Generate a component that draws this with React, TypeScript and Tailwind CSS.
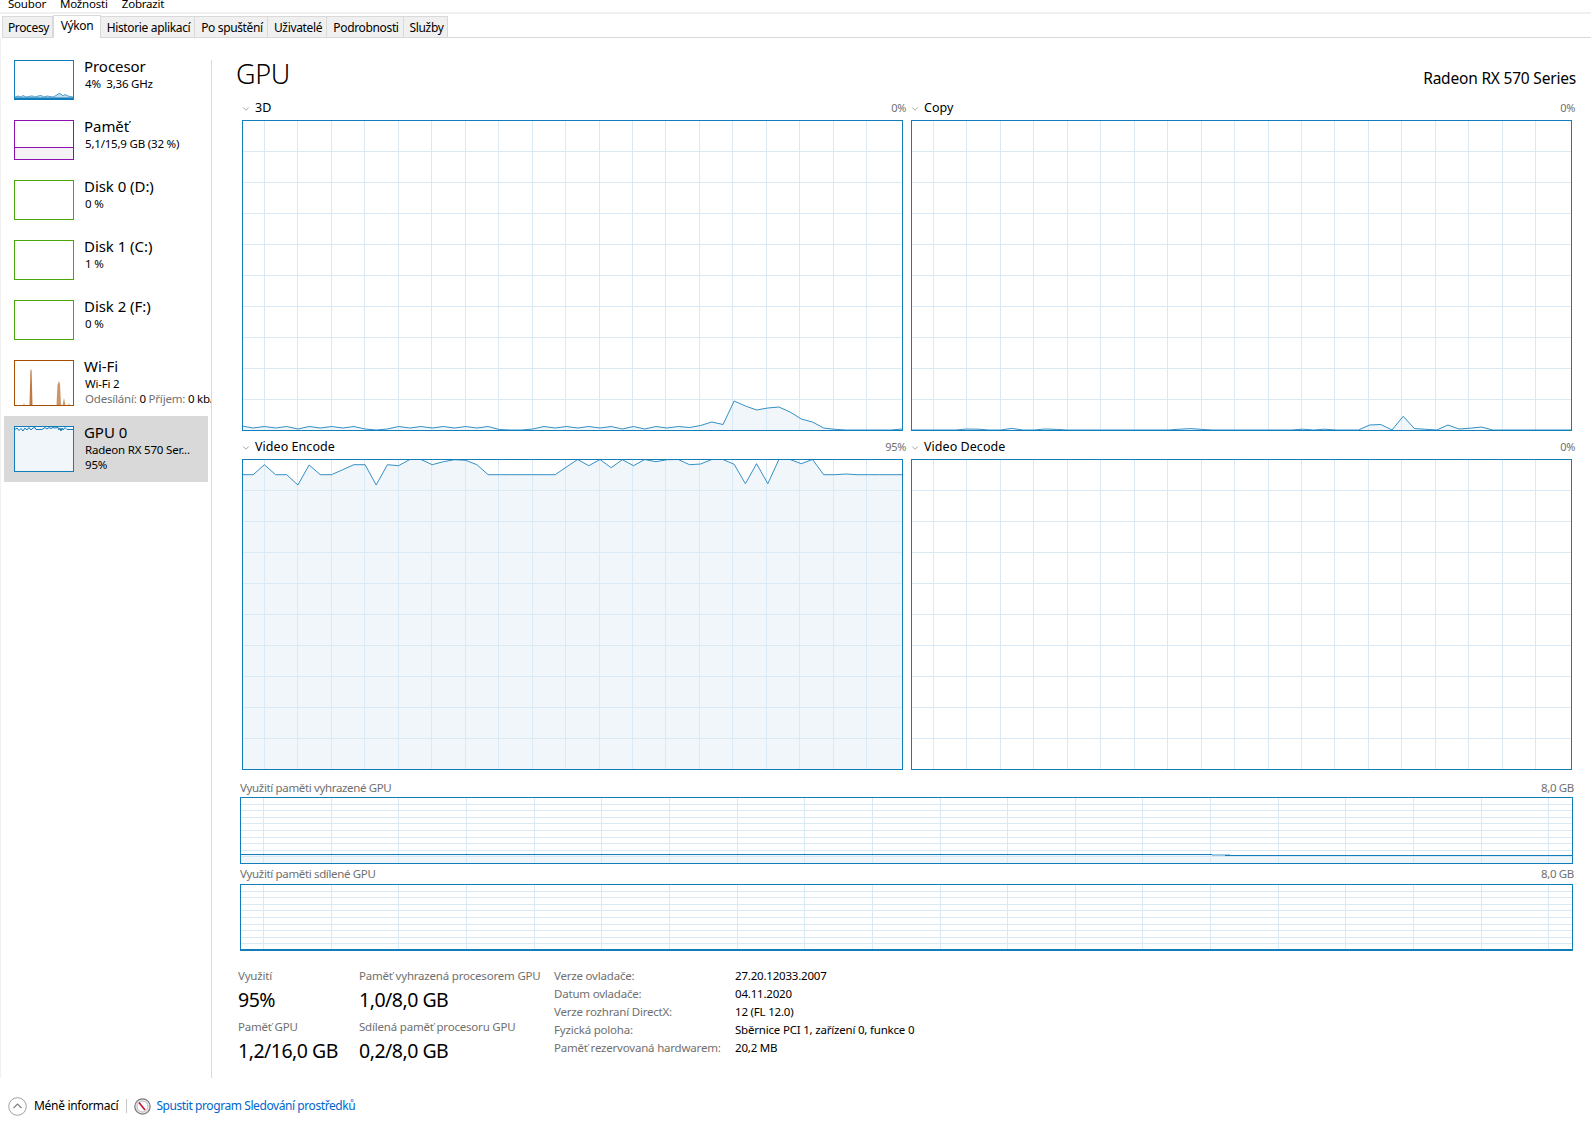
import { ChevronDown } from "lucide-react"

const BLUE = "#117dbb"
const GRID = "#d9eaf4"
const FILL = "#f1f6fa"

const TABS = [
  { label: "Procesy", w: "w-[51px]" },
  { label: "Výkon", w: "w-[48px]", active: true },
  { label: "Historie aplikací", w: "w-[94px]" },
  { label: "Po spuštění", w: "w-[73px]" },
  { label: "Uživatelé", w: "w-[59px]" },
  { label: "Podrobnosti", w: "w-[77px]" },
  { label: "Služby", w: "w-[44px]" },
]

// sample heights in px above the graph floor, 60 samples across
const GRAPH_3D = [
  4, 2, 3.5, 2, 3.5, 1, 3.5, 2, 3.5, 2, 3.5, 1, 0, 1, 3.5, 2, 3.5, 2, 3.5, 2, 3.5, 2, 3.5, 0.5, 0, 0, 1, 3.5, 2, 3.5, 2,
  3.5, 2, 3.5, 1, 3.5, 1, 3.5, 2, 3.5, 2.5, 4.5, 8, 5.5, 29, 24, 20, 22, 23, 18, 11, 8, 2, 0.7, 0, 0, 0, 0, 0, 1,
]
const GRAPH_COPY = [
  0, 0, 0, 0, 0, 1, 0.8, 0, 0, 1.6, 0, 0, 1, 0.6, 0, 0, 0, 0, 0, 0, 0, 0, 0, 0, 0.8, 1.4, 0.6, 0, 0, 0, 0, 0, 0, 0, 0, 0.8,
  0, 0.8, 0, 0, 0, 5, 5.5, 0, 13.7, 1.5, 0.7, 0, 5, 1, 1.8, 3, 0, 0, 0, 0, 0, 0, 0, 0,
]
const GRAPH_ENCODE = [
  15.7, 15.7, 5.7, 15.7, 15.7, 26, 6, 15.7, 15.7, 10.7, 5.7, 5.7, 26, 5.7, 6.7, 0.5, 0.5, 5.7, 2.7, 0.7, 1.3, 5.7, 15.7,
  15.7, 15.7, 15.7, 15.7, 15.7, 15.7, 8, 0.5, 6.7, 0.5, 8.7, 0.7, 6.7, 0.5, 2.7, 0.7, 0.5, 5.7, 5, 0.5, 0.5, 5.3, 24.7,
  4.7, 24.7, 0.5, 0.5, 4.7, 0.5, 15.7, 15.7, 15, 15.7, 15.7, 15.7, 15.7, 15.7,
]

function BigGraph({ floor, samples }: { floor?: boolean; samples?: number[] }) {
  const W = 661
  const H = 311
  let pts = ""
  if (samples) {
    pts = samples
      .map((v, i) => {
        const x = (i * (W - 1)) / (samples.length - 1)
        const y = floor ? H - 1 - v : v
        return `${x.toFixed(1)},${y.toFixed(1)}`
      })
      .join(" ")
  }
  return (
    <svg viewBox={`0 0 ${W} ${H}`} preserveAspectRatio="none" className="block w-full h-[311px]">
      {samples && <polygon points={`0,${H} ${pts} ${W},${H}`} fill={FILL} />}
      {Array.from({ length: 19 }).map((_, i) => {
        const x = Math.round(22 + i * 33.45) + 0.5
        return <line key={i} x1={x} x2={x} y1={0} y2={H} stroke={GRID} strokeWidth={1} shapeRendering="crispEdges" />
      })}
      {Array.from({ length: 9 }).map((_, i) => {
        const y = 31 * (i + 1) + 0.5
        return <line key={i} x1={0} x2={W} y1={y} y2={y} stroke={GRID} strokeWidth={1} shapeRendering="crispEdges" />
      })}
      {samples && <polyline points={pts} fill="none" stroke={BLUE} strokeOpacity={0.85} strokeWidth={1} />}
      <rect x={0.5} y={0.5} width={W - 1} height={H - 1} fill="none" stroke={BLUE} strokeWidth={1} shapeRendering="crispEdges" />
    </svg>
  )
}

function WideGraph({ kind }: { kind: "reserved" | "shared" }) {
  const W = 1333
  const H = 67
  return (
    <svg viewBox={`0 0 ${W} ${H}`} preserveAspectRatio="none" className="block w-full h-[67px]">
      {kind === "reserved" && <rect x={0} y={58} width={W} height={H - 58} fill={FILL} />}
      {Array.from({ length: 20 }).map((_, i) => {
        const x = Math.round(23 + i * 67.65) + 0.5
        return <line key={i} x1={x} x2={x} y1={0} y2={H} stroke={GRID} strokeWidth={1} shapeRendering="crispEdges" />
      })}
      {Array.from({ length: 9 }).map((_, i) => {
        const y = Math.round(6.6 * (i + 1)) + 0.5
        return <line key={i} x1={0} x2={W} y1={y} y2={y} stroke={GRID} strokeWidth={1} shapeRendering="crispEdges" />
      })}
      {kind === "reserved" && (
        <>
          <rect x={0} y={57} width={972} height={1} fill={BLUE} />
          <rect x={972} y={57} width={18} height={2} fill={BLUE} fillOpacity={0.4} />
          <rect x={985} y={58} width={W - 985} height={1} fill={BLUE} />
        </>
      )}
      {kind === "shared" && <rect x={0} y={H - 2} width={W} height={2} fill={BLUE} />}
      <rect x={0.5} y={0.5} width={W - 1} height={H - 1} fill="none" stroke={BLUE} strokeWidth={1} shapeRendering="crispEdges" />
    </svg>
  )
}

function Thumb({ color, tall, children, fill }: { color: string; tall?: boolean; fill?: string; children?: React.ReactNode }) {
  return (
    <div
      className={`w-[60px] shrink-0 border relative overflow-hidden ${tall ? "h-[46px]" : "h-[40px]"}`}
      style={{ borderColor: color, backgroundColor: fill || "#fff" }}
    >
      {children}
    </div>
  )
}

function CpuSpark() {
  return (
    <svg viewBox="0 0 58 38" className="block w-full h-full">
      <polygon
        points="0,37 0,36 3,35 6,36 8,34.5 11,36 14,35.5 17,34.8 20,36 23,35 26,34.5 29,36 32,35 35,35.5 38,36 41,34.5 44,32.5 46,33 48,35 50,33.5 53,35 55,35.5 58,36 58,38 0,38"
        fill="#c5dded"
      />
      <polyline
        points="0,36 3,35 6,36 8,34.5 11,36 14,35.5 17,34.8 20,36 23,35 26,34.5 29,36 32,35 35,35.5 38,36 41,34.5 44,32.5 46,33 48,35 50,33.5 53,35 55,35.5 58,36"
        fill="none"
        stroke={BLUE}
        strokeOpacity={0.7}
        strokeWidth={1}
      />
      <rect x={0} y={36.5} width={58} height={1.5} fill={BLUE} />
    </svg>
  )
}

function MemFill() {
  return <div className="absolute inset-x-0 bottom-0 h-[12px] bg-[#f4f2f4] border-t border-[#8b12ae]" />
}

function WifiSpark() {
  const c = "#a74f01"
  return (
    <svg viewBox="0 0 58 44" className="block w-full h-full">
      <path d="M14.5 44 L15.4 10 L16 8 L16.6 10 L17.5 44 Z" fill={c} fillOpacity={0.75} />
      <path d="M41.5 44 L42.5 24 L44 20 L45 23 L46 44 Z" fill={c} fillOpacity={0.6} />
      <path d="M47.5 44 L49 37 L50.5 44 Z" fill={c} fillOpacity={0.55} />
      <path d="M8 44 L9 42 L10 44 Z M53 44 L54 42 L55 44 Z" fill={c} fillOpacity={0.4} />
    </svg>
  )
}

function GpuSpark() {
  return (
    <svg viewBox="0 0 58 44" className="block w-full h-full">
      <polyline
        points="0,2.5 2,1 4,3.5 6,1.5 8,4 10,1 12,3 14,0.5 16,3 18,1 20,0.5 21,2.5 27,2.5 30,0.5 32,2 34,0.5 36,1.5 38,0.5 40,1 43,0.5 44,3 45,1 46,4 47,1 48,3 50,0.5 52,2.5 58,2.5"
        fill="none"
        stroke={BLUE}
        strokeWidth={1}
      />
    </svg>
  )
}

function SideItem({
  thumb,
  title,
  sub,
  extra,
  className,
}: {
  thumb: React.ReactNode
  title: string
  sub: React.ReactNode
  extra?: React.ReactNode
  className?: string
}) {
  return (
    <div className={`flex gap-[10px] whitespace-nowrap ${className || ""}`}>
      {thumb}
      <div className="flex flex-col -mt-[4px]">
        <div className="text-[15px] leading-[20px] tracking-[-0.05px]">{title}</div>
        <div className="ml-px text-[11.5px] leading-[15px] tracking-[-0.2px]">{sub}</div>
        {extra && <div className="ml-px text-[11.5px] leading-[15px] tracking-[-0.2px]">{extra}</div>}
      </div>
    </div>
  )
}

function GraphHead({ title, value }: { title: string; value: string }) {
  return (
    <div className="h-[22px] flex items-center -mr-[3px] pb-[1px]">
      <ChevronDown className="w-[10px] h-[10px] text-[#707070] -ml-px" strokeWidth={1.5} />
      <span className="ml-[4px] text-[12.5px] tracking-[0.05px]">{title}</span>
      <span className="ml-auto text-[11px] text-[#707070] tracking-[-0.3px]">{value}</span>
    </div>
  )
}

function WideHead({ title, className }: { title: string; className: string }) {
  return (
    <div className={`flex items-center text-[11.5px] text-[#707070] tracking-[-0.35px] -mr-px ${className}`}>
      <span>{title}</span>
      <span className="ml-auto">8,0 GB</span>
    </div>
  )
}

function Stat({ label, value, className }: { label: string; value: string; className?: string }) {
  return (
    <div className={className}>
      <div className="text-[11.5px] leading-[16px] text-[#707070] tracking-[-0.2px] whitespace-nowrap">{label}</div>
      <div className="text-[19.5px] leading-[28px] mt-[2px] tracking-[-0.5px] whitespace-nowrap">{value}</div>
    </div>
  )
}

const DETAILS = [
  ["Verze ovladače:", "27.20.12033.2007"],
  ["Datum ovladače:", "04.11.2020"],
  ["Verze rozhraní DirectX:", "12 (FL 12.0)"],
  ["Fyzická poloha:", "Sběrnice PCI 1, zařízení 0, funkce 0"],
  ["Paměť rezervovaná hardwarem:", "20,2 MB"],
]

export default function App() {
  return (
    <div className="w-[1591px] h-[1121px] overflow-hidden bg-white text-black flex flex-col [font-family:'Noto_Sans',sans-serif]">
      {/* menu, cut off by the top of the window */}
      <div className="h-[12px] flex items-end overflow-hidden text-[11.5px] leading-[15px] tracking-[-0.2px] pl-[8px] gap-[14px] shrink-0">
        <span className="mb-[1px]">Soubor</span>
        <span className="mb-[1px]">Možnosti</span>
        <span className="mb-[1px]">Zobrazit</span>
      </div>
      <div className="h-[26px] shrink-0 border-t-2 border-[#f0f0f0] flex items-end pl-[2px] pb-0">
        <div className="flex items-end w-full border-b border-[#d9d9d9] h-full">
          {TABS.map((t) =>
            t.active ? (
              <div
                key={t.label}
                className={`${t.w} h-[23px] -mb-px bg-white border border-b-0 border-[#d9d9d9] flex items-start justify-center pt-[1px] text-[12px] tracking-[-0.35px]`}
              >
                {t.label}
              </div>
            ) : (
              <div
                key={t.label}
                className={`${t.w} h-[21px] pt-[2px] pl-[2px] bg-[#f0f0f0] border-r border-t border-[#d9d9d9] first:border-l flex items-center justify-center text-[12px] tracking-[-0.35px] whitespace-nowrap`}
              >
                {t.label}
              </div>
            )
          )}
        </div>
      </div>

      <div className="h-[1040px] shrink-0 flex border-l border-[#f0f0f0]">
        {/* left list */}
        <div className="w-[210px] shrink-0 overflow-hidden pt-[22px] flex flex-col">
          <SideItem className="h-[60px] pl-[13px]" thumb={<Thumb color={BLUE}><CpuSpark /></Thumb>} title="Procesor" sub={"4%\u00a0\u00a03,36 GHz"} />
          <SideItem className="h-[60px] pl-[13px]" thumb={<Thumb color="#8b12ae"><MemFill /></Thumb>} title="Paměť" sub="5,1/15,9 GB (32 %)" />
          <SideItem className="h-[60px] pl-[13px]" thumb={<Thumb color="#4da60c" />} title="Disk 0 (D:)" sub="0 %" />
          <SideItem className="h-[60px] pl-[13px]" thumb={<Thumb color="#4da60c" />} title="Disk 1 (C:)" sub="1 %" />
          <SideItem className="h-[60px] pl-[13px]" thumb={<Thumb color="#4da60c" />} title="Disk 2 (F:)" sub="0 %" />
          <SideItem
            className="h-[56px] pl-[13px]"
            thumb={<Thumb color="#a74f01" tall><WifiSpark /></Thumb>}
            title="Wi-Fi"
            sub="Wi-Fi 2"
            extra={
              <>
                <span className="text-[#707070]">Odesílání:</span> 0 <span className="text-[#707070]">Příjem:</span> 0 kb/s
              </>
            }
          />
          <SideItem
            className="h-[66px] ml-[3px] mr-[3px] pl-[10px] pt-[10px] bg-[#d9d9d9]"
            thumb={<Thumb color={BLUE} tall fill={FILL}><GpuSpark /></Thumb>}
            title="GPU 0"
            sub="Radeon RX 570 Ser..."
            extra="95%"
          />
        </div>

        {/* detail pane */}
        <div className="flex-1 min-w-0 mt-[22px] border-l border-[#d9d9d9] flex flex-col">
          <div className="h-[40px] -mt-[2px] pt-[1px] shrink-0 pl-[24px] pr-[15px] flex justify-between">
            <div className="text-[27px] leading-[30px] tracking-[-0.3px] font-light">GPU</div>
            <div className="text-[15.5px] leading-[20px] mt-[9px] tracking-[-0.2px]">Radeon RX 570 Series</div>
          </div>
          <div className="pl-[30px] pr-[19px] grid grid-cols-[661px_661px] gap-x-[8px] gap-y-[6px] shrink-0">
            <div>
              <GraphHead title="3D" value="0%" />
              <BigGraph floor samples={GRAPH_3D} />
            </div>
            <div>
              <GraphHead title="Copy" value="0%" />
              <BigGraph floor samples={GRAPH_COPY} />
            </div>
            <div>
              <GraphHead title="Video Encode" value="95%" />
              <BigGraph samples={GRAPH_ENCODE} />
            </div>
            <div>
              <GraphHead title="Video Decode" value="0%" />
              <BigGraph />
            </div>
          </div>
          <div className="pl-[28px] pr-[18px] pt-[8px] shrink-0">
            <WideHead title="Využití paměti vyhrazené GPU" className="h-[19px]" />
            <WideGraph kind="reserved" />
            <WideHead title="Využití paměti sdílené GPU" className="h-[20px]" />
            <WideGraph kind="shared" />
          </div>
          <div className="flex pl-[26px] pt-[17px]">
            <div className="w-[121px] shrink-0">
              <Stat label="Využití" value="95%" />
              <Stat label="Paměť GPU" value="1,2/16,0 GB" className="mt-[5px]" />
            </div>
            <div className="w-[195px] shrink-0">
              <Stat label="Paměť vyhrazená procesorem GPU" value="1,0/8,0 GB" />
              <Stat label="Sdílená paměť procesoru GPU" value="0,2/8,0 GB" className="mt-[5px]" />
            </div>
            <div className="grid grid-cols-[181px_auto] auto-rows-[18px] text-[11.5px] leading-[16px] tracking-[-0.2px] whitespace-nowrap">
              {DETAILS.map(([k, v]) => (
                <div key={k} className="contents">
                  <div className="text-[#707070]">{k}</div>
                  <div>{v}</div>
                </div>
              ))}
            </div>
          </div>
        </div>
      </div>

      {/* footer */}
      <div className="flex-1 flex items-center pl-[8px] pt-[13px] text-[12px] tracking-[-0.3px]">
        <svg width="19" height="19" viewBox="0 0 19 19" className="shrink-0">
          <circle cx="9.5" cy="9.5" r="8.8" fill="#fff" stroke="#a0a0a0" strokeWidth="1" />
          <path d="M5.5 11 L9.5 7 L13.5 11" fill="none" stroke="#808080" strokeWidth="1.2" />
        </svg>
        <span className="ml-[7px]">Méně informací</span>
        <div className="w-px h-[14px] bg-[#c8c8c8] ml-[8px]" />
        <svg width="17" height="17" viewBox="0 0 17 17" className="ml-[7px] shrink-0">
          <circle cx="8.5" cy="8.5" r="7.7" fill="#e8e8e8" stroke="#7a7a7a" strokeWidth="1.2" />
          <circle cx="8.5" cy="8.5" r="5.4" fill="#fff" stroke="#b0b0b0" strokeWidth="0.8" />
          <path d="M5 4.5 L11 12" stroke="#c8102e" strokeWidth="1.6" />
        </svg>
        <span className="ml-[5px] text-[#0066cc] tracking-[-0.42px]">Spustit program Sledování prostředků</span>
      </div>
    </div>
  )
}
